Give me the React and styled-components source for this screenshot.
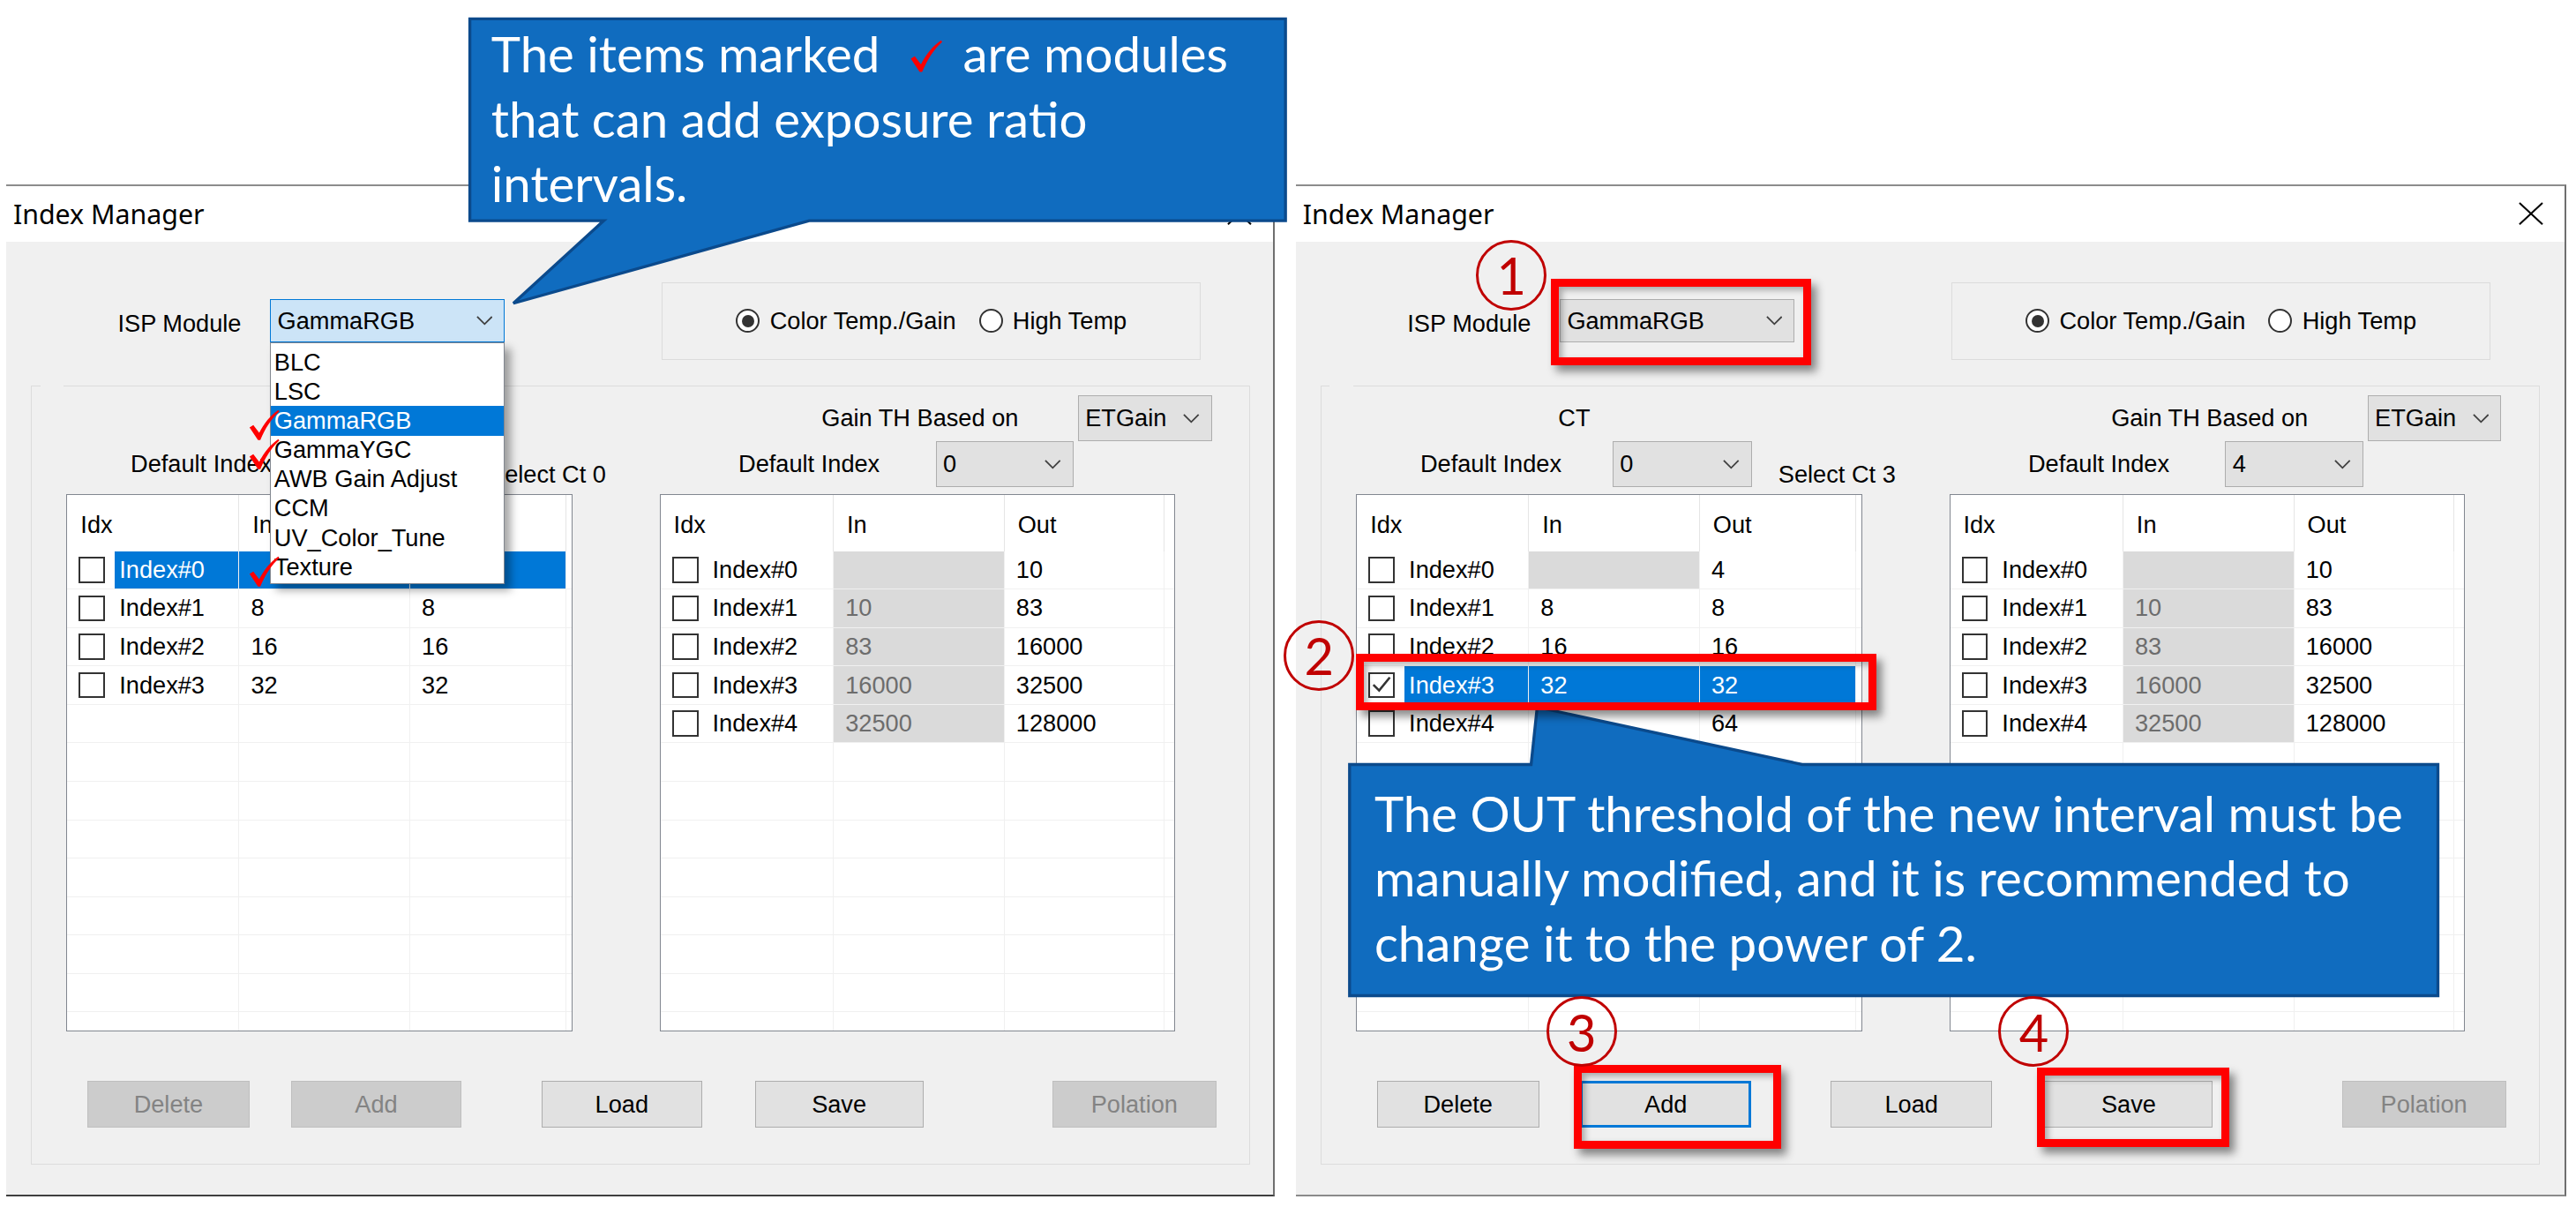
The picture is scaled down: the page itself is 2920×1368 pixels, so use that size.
import React from 'react';
import styled, { createGlobalStyle } from 'styled-components';

const GlobalStyle = createGlobalStyle`
  html, body {
    margin: 0;
    padding: 0;
    background: #fff;
  }
  body {
    width: 2920px;
    height: 1368px;
    overflow: hidden;
    font-family: "Liberation Sans", Arial, sans-serif;
  }
`;

// the whole picture is laid out in the 1568px-wide units of the source image
const Page = styled.div`
  position: relative;
  width: 1568px;
  height: 735px;
  zoom: 1.8622;
  background: #fff;
  overflow: hidden;
  font-size: 14.6px;
  color: #000;
`;

const Desktop = styled.div`
  display: flex;
  gap: 13px;
  padding: 112px 0 0 4px;
`;

const Window = styled.div`
  position: relative;
  width: ${(p) => p.$w}px;
  height: 616px;
  box-sizing: border-box;
  display: flex;
  flex-direction: column;
  border-top: 1.2px solid #8c8c8c;
  border-right: 1.4px solid #6f6f6f;
  border-bottom: 1.6px solid ${(p) => p.$bottom};
  background: #f0f0f0;
`;

const TitleBar = styled.div`
  height: 34.3px;
  flex-shrink: 0;
  display: flex;
  align-items: center;
  justify-content: space-between;
  padding: 0 13px 0 4px;
  background: #fff;
`;

const TitleText = styled.span`
  font-family: "Noto Sans", "Open Sans", sans-serif;
  font-size: 16.3px;
  color: #000;
`;

const Client = styled.div`
  flex: 1;
  padding-top: 24.5px;
`;

const TopRow = styled.div`
  display: flex;
  align-items: center;
  height: 47px;
`;

const IspLabel = styled.span`
  margin-left: 67.7px;
  width: 92.7px;
  padding-top: 3px;
`;

const ComboWrap = styled.div`
  position: relative;
`;

const Combo = styled.div`
  width: ${(p) => p.$w}px;
  height: ${(p) => p.$h || 28}px;
  box-sizing: border-box;
  display: flex;
  align-items: center;
  justify-content: space-between;
  padding: 0 7px 0 4px;
  border: 1px solid ${(p) => (p.$open ? '#0078d7' : '#adadad')};
  background: ${(p) => (p.$open ? '#cce4f7' : '#e1e1e1')};
`;

const DropList = styled.div`
  position: absolute;
  top: 100%;
  left: 0;
  width: 100%;
  box-sizing: border-box;
  padding: 2.5px 0 1px;
  border: 1px solid #828790;
  background: #fff;
  box-shadow: 4px 4px 5px rgba(0, 0, 0, 0.35);
  z-index: 5;
`;

const ListItem = styled.div`
  position: relative;
  height: 17.8px;
  display: flex;
  align-items: center;
  padding-left: 2px;
  background: ${(p) => (p.$sel ? '#0078d7' : 'transparent')};
  color: ${(p) => (p.$sel ? '#fff' : '#000')};
`;

const TickSvg = styled.svg`
  display: block;
  width: ${(p) => p.$w}px;
  height: ${(p) => p.$h}px;
`;

const ListTick = styled.span`
  position: absolute;
  left: -14px;
  top: 2px;
`;

const InlineTick = styled.span`
  display: inline-block;
  margin: 0 4px 0 10px;
  vertical-align: baseline;
`;

const RedTick = ({ w, h }) => (
  <TickSvg $w={w} $h={h} viewBox="0 0 20 20">
    <path
      d="M0.8 11.6 L3.2 10.1 L7 15 C10 9 14 4 19.2 0.4 L19.9 1.3 C14.9 5.8 10.9 12 7.7 19.6 L6.2 19.6 Z"
      fill="#ff0000"
    />
  </TickSvg>
);

const RadioGroup = styled.div`
  margin-left: 95.2px;
  width: 328.4px;
  height: 47px;
  box-sizing: border-box;
  display: flex;
  align-items: center;
  padding: 0 0 0 45px;
  border: 1px solid #dcdcdc;
`;

const RadioOption = styled.label`
  display: flex;
  align-items: center;
  gap: 6px;
  margin-right: 14px;
`;

const Radio = styled.span`
  width: 14.5px;
  height: 14.5px;
  box-sizing: border-box;
  border-radius: 50%;
  border: 1.3px solid #333;
  background: #fff;
  display: flex;
  align-items: center;
  justify-content: center;
  &::after {
    content: '';
    display: ${(p) => (p.$checked ? 'block' : 'none')};
    width: 7.5px;
    height: 7.5px;
    border-radius: 50%;
    background: #333;
  }
`;

const GroupBox = styled.div`
  position: relative;
  margin: 16px 0 0 15px;
  width: 742px;
  height: 474px;
  box-sizing: border-box;
  border: 1px solid #dcdcdc;
  padding-top: 5.5px;
  display: grid;
  grid-template-columns: 364px 1fr;
  align-content: start;
  &::before {
    content: '';
    position: absolute;
    top: -1px;
    left: 5px;
    width: 14px;
    height: 1px;
    background: #f0f0f0;
  }
`;

const Panel = styled.div`
  display: flex;
  flex-direction: column;
`;

const FieldRow = styled.div`
  display: flex;
  align-items: center;
  height: ${(p) => p.$h}px;
`;

const Label = styled.span`
  margin-left: ${(p) => p.$ml || 0}px;
  width: ${(p) => (p.$w ? `${p.$w}px` : 'auto')};
  flex-shrink: 0;
`;

const SelectCt = styled.span`
  align-self: flex-end;
  margin-left: 16px;
  line-height: 16px;
`;

const Table = styled.div`
  width: ${(p) => p.$w}px;
  height: 327px;
  margin: 4px 0 0 ${(p) => p.$ml}px;
  box-sizing: border-box;
  border: 1px solid #828790;
  background: #fff;
  overflow: hidden;
`;

const GridRow = styled.div`
  display: grid;
  grid-template-columns: ${(p) => p.$cols};
`;

const HeadCell = styled.div`
  height: 34px;
  box-sizing: border-box;
  display: flex;
  align-items: center;
  padding: 2px 0 0 8px;
  border-right: ${(p) => (p.$last ? 'none' : '1px solid #e5e5e5')};
`;

const Cell = styled.div`
  height: 23.4px;
  box-sizing: border-box;
  display: flex;
  align-items: center;
  padding-left: 7px;
  border-right: ${(p) => (p.$last ? 'none' : '1px solid #f0f0f0')};
  border-bottom: 1px solid #f0f0f0;
  background: ${(p) => (p.$sel ? '#0078d7' : p.$gray ? '#dadada' : '#fff')};
  color: ${(p) => (p.$sel ? '#fff' : p.$gray ? '#6d6d6d' : '#000')};
`;

const CheckBox = styled.span`
  width: 16px;
  height: 16px;
  flex-shrink: 0;
  box-sizing: border-box;
  border: 1.3px solid #333;
  background: #fff;
  display: flex;
  align-items: center;
  justify-content: center;
`;

const IdxLabel = styled.span`
  align-self: stretch;
  display: flex;
  align-items: center;
  margin-left: 5.6px;
  padding: 0 3px;
  flex: ${(p) => (p.$sel ? 1 : 'none')};
  background: ${(p) => (p.$sel ? '#0078d7' : 'transparent')};
  color: ${(p) => (p.$sel ? '#fff' : '#000')};
`;

const ButtonRow = styled.div`
  grid-column: 1 / -1;
  display: flex;
  margin-top: 30px;
  padding-left: 33.5px;
`;

const Button = styled.div`
  width: ${(p) => p.$w}px;
  height: 28.5px;
  margin-left: ${(p) => p.$ml}px;
  box-sizing: border-box;
  display: flex;
  align-items: center;
  justify-content: center;
  border: ${(p) =>
    p.$focus ? '2px solid #0078d7' : `1px solid ${p.$disabled ? '#bfbfbf' : '#adadad'}`};
  background: ${(p) => (p.$disabled ? '#cccccc' : '#e1e1e1')};
  color: ${(p) => (p.$disabled ? '#838383' : '#000')};
`;

const AnnotationLayer = styled.svg`
  position: absolute;
  left: 0;
  top: 0;
  width: 1568px;
  height: 735px;
  pointer-events: none;
`;

const CalloutText = styled.div`
  position: absolute;
  left: ${(p) => p.$x}px;
  top: ${(p) => p.$y}px;
  font-family: Lato, "Open Sans", sans-serif;
  font-size: 30.3px;
  line-height: 39.5px;
  color: #fff;
  white-space: nowrap;
`;

const RedBox = styled.div`
  position: absolute;
  left: ${(p) => p.$x}px;
  top: ${(p) => p.$y}px;
  width: ${(p) => p.$w}px;
  height: ${(p) => p.$h}px;
  box-sizing: border-box;
  border: 5px solid #ff0000;
  box-shadow: 3px 4px 5px rgba(0, 0, 0, 0.45), inset 2px 2px 4px rgba(0, 0, 0, 0.3);
`;

const StepCircle = styled.div`
  position: absolute;
  left: ${(p) => p.$x - 21.5}px;
  top: ${(p) => p.$y - 21.5}px;
  width: 43px;
  height: 43px;
  box-sizing: border-box;
  border: 1.8px solid #c00000;
  border-radius: 50%;
  display: flex;
  align-items: center;
  justify-content: center;
  font-family: Lato, "Open Sans", sans-serif;
  font-size: 31px;
  line-height: 1;
  color: #c00000;
`;

const Chevron = () => (
  <svg width="10" height="6" viewBox="0 0 10 6">
    <polyline points="0.5,0.5 5,5 9.5,0.5" fill="none" stroke="#404040" strokeWidth="1" />
  </svg>
);

const CloseIcon = () => (
  <svg width="15" height="14" viewBox="0 0 15 14">
    <path d="M0.5 0.5 L14.5 13.5 M14.5 0.5 L0.5 13.5" stroke="#000" strokeWidth="1.1" />
  </svg>
);

const CheckMark = () => (
  <svg width="13" height="13" viewBox="0 0 13 13">
    <polyline points="1.5,6.5 5,10 11.5,2" fill="none" stroke="#333" strokeWidth="1.4" />
  </svg>
);

const ispModules = ['BLC', 'LSC', 'GammaRGB', 'GammaYGC', 'AWB Gain Adjust', 'CCM', 'UV_Color_Tune', 'Texture'];
const ticked = ['GammaRGB', 'GammaYGC', 'Texture'];

const gainRows = [
  { idx: 0, in: '', out: '10', gray: true },
  { idx: 1, in: '10', out: '83', gray: true },
  { idx: 2, in: '83', out: '16000', gray: true },
  { idx: 3, in: '16000', out: '32500', gray: true },
  { idx: 4, in: '32500', out: '128000', gray: true },
];

// the left dialog has its module list open, which hides the CT label, the
// CT combo value and the first row's Out value
const dialogs = [
  {
    w: 772,
    bottom: '#3f3f3f',
    ispOpen: true,
    ctLabel: '',
    ctIndex: '',
    gainIndex: '0',
    selectCt: '0',
    ctRows: [
      { idx: 0, in: '', out: '', selected: true },
      { idx: 1, in: '8', out: '8' },
      { idx: 2, in: '16', out: '16' },
      { idx: 3, in: '32', out: '32' },
    ],
    buttons: { delete: false, add: false, focus: false },
  },
  {
    w: 773,
    bottom: '#8a8a8a',
    ispOpen: false,
    ctLabel: 'CT',
    ctIndex: '0',
    gainIndex: '4',
    selectCt: '3',
    ctRows: [
      { idx: 0, in: '', out: '4', gray: true },
      { idx: 1, in: '8', out: '8' },
      { idx: 2, in: '16', out: '16' },
      { idx: 3, in: '32', out: '32', selected: true, checked: true },
      { idx: 4, in: '', out: '64' },
    ],
    buttons: { delete: true, add: true, focus: true },
  },
];

const ListView = ({ width, ml, cols, rows }) => {
  const filled = [...rows, ...Array(14 - rows.length).fill(null)];
  return (
    <Table $w={width} $ml={ml}>
      <GridRow $cols={cols}>
        <HeadCell>Idx</HeadCell>
        <HeadCell>In</HeadCell>
        <HeadCell>Out</HeadCell>
        <HeadCell $last />
      </GridRow>
      {filled.map((r, i) =>
        r ? (
          <GridRow key={i} $cols={cols}>
            <Cell>
              <CheckBox>{r.checked && <CheckMark />}</CheckBox>
              <IdxLabel $sel={r.selected}>Index#{r.idx}</IdxLabel>
            </Cell>
            <Cell $sel={r.selected} $gray={r.gray}>{r.in}</Cell>
            <Cell $sel={r.selected}>{r.out}</Cell>
            <Cell $last />
          </GridRow>
        ) : (
          <GridRow key={i} $cols={cols}>
            <Cell />
            <Cell />
            <Cell />
            <Cell $last />
          </GridRow>
        )
      )}
    </Table>
  );
};

const IndexManager = ({ d }) => (
  <Window $w={d.w} $bottom={d.bottom}>
    <TitleBar>
      <TitleText>Index Manager</TitleText>
      <CloseIcon />
    </TitleBar>
    <Client>
      <TopRow>
        <IspLabel>ISP Module</IspLabel>
        <ComboWrap>
          <Combo $w={143} $h={26.5} $open={d.ispOpen}>
            GammaRGB
            <Chevron />
          </Combo>
          {d.ispOpen && (
            <DropList>
              {ispModules.map((m) => (
                <ListItem key={m} $sel={m === 'GammaRGB'}>
                  {ticked.includes(m) && (
                    <ListTick>
                      <RedTick w={19.5} h={19} />
                    </ListTick>
                  )}
                  {m}
                </ListItem>
              ))}
            </DropList>
          )}
        </ComboWrap>
        <RadioGroup>
          <RadioOption>
            <Radio $checked />
            Color Temp./Gain
          </RadioOption>
          <RadioOption>
            <Radio />
            High Temp
          </RadioOption>
        </RadioGroup>
      </TopRow>

      <GroupBox>
        <Panel>
          <FieldRow $h={27.5}>
            <Label $ml={144}>{d.ctLabel}</Label>
          </FieldRow>
          <FieldRow $h={28.5}>
            <Label $ml={60} $w={117}>Default Index</Label>
            <Combo $w={85}>
              {d.ctIndex}
              <Chevron />
            </Combo>
            <SelectCt>Select Ct {d.selectCt}</SelectCt>
          </FieldRow>
          <ListView width={308} ml={21} cols="104.7px 104px 95px 1fr" rows={d.ctRows} />
        </Panel>
        <Panel>
          <FieldRow $h={27.5}>
            <Label $ml={116.6} $w={156}>Gain TH Based on</Label>
            <Combo $w={81.5}>
              ETGain
              <Chevron />
            </Combo>
          </FieldRow>
          <FieldRow $h={28.5}>
            <Label $ml={66} $w={120}>Default Index</Label>
            <Combo $w={84}>
              {d.gainIndex}
              <Chevron />
            </Combo>
          </FieldRow>
          <ListView width={314} ml={18} cols="105.5px 104px 97.5px 1fr" rows={gainRows} />
        </Panel>
        <ButtonRow>
          <Button $w={99} $ml={0} $disabled={!d.buttons.delete}>Delete</Button>
          <Button $w={104} $ml={25} $disabled={!d.buttons.add} $focus={d.buttons.focus}>Add</Button>
          <Button $w={98} $ml={48.5}>Load</Button>
          <Button $w={102.5} $ml={32}>Save</Button>
          <Button $w={100} $ml={78.5} $disabled>Polation</Button>
        </ButtonRow>
      </GroupBox>
    </Client>
  </Window>
);

export default function App() {
  return (
    <>
      <GlobalStyle />
      <Page>
        <Desktop>
          {dialogs.map((d, i) => (
            <IndexManager key={i} d={d} />
          ))}
        </Desktop>

        <AnnotationLayer viewBox="0 0 1568 735">
          <path
            d="M286 11.5 H782.5 V134.3 H492.6 L312.5 184.6 L367.5 134.3 H286 Z"
            fill="#106cbf"
            stroke="#0b4a8c"
            strokeWidth="1.8"
          />
          <path
            d="M821.5 465.3 H932 L935.7 430.4 L1097 465.3 H1484 V606 H821.5 Z"
            fill="#106cbf"
            stroke="#0b4a8c"
            strokeWidth="1.8"
          />
        </AnnotationLayer>

        <CalloutText $x={299} $y={12.9}>
          The items marked{' '}
          <InlineTick>
            <RedTick w={21} h={20} />
          </InlineTick>{' '}
          are modules
          <br />
          that can add exposure ratio
          <br />
          intervals.
        </CalloutText>
        <CalloutText $x={836.6} $y={475.2}>
          The OUT threshold of the new interval must be
          <br />
          manually modified, and it is recommended to
          <br />
          change it to the power of 2.
        </CalloutText>

        <RedBox $x={944} $y={169.7} $w={158.5} $h={52.8} />
        <RedBox $x={825.5} $y={398} $w={316.5} $h={34.3} />
        <RedBox $x={958} $y={648} $w={126} $h={51} />
        <RedBox $x={1240} $y={650} $w={117} $h={48} />

        <StepCircle $x={920} $y={167.5}>1</StepCircle>
        <StepCircle $x={803} $y={399}>2</StepCircle>
        <StepCircle $x={962.7} $y={628}>3</StepCircle>
        <StepCircle $x={1238} $y={628}>4</StepCircle>
      </Page>
    </>
  );
}
